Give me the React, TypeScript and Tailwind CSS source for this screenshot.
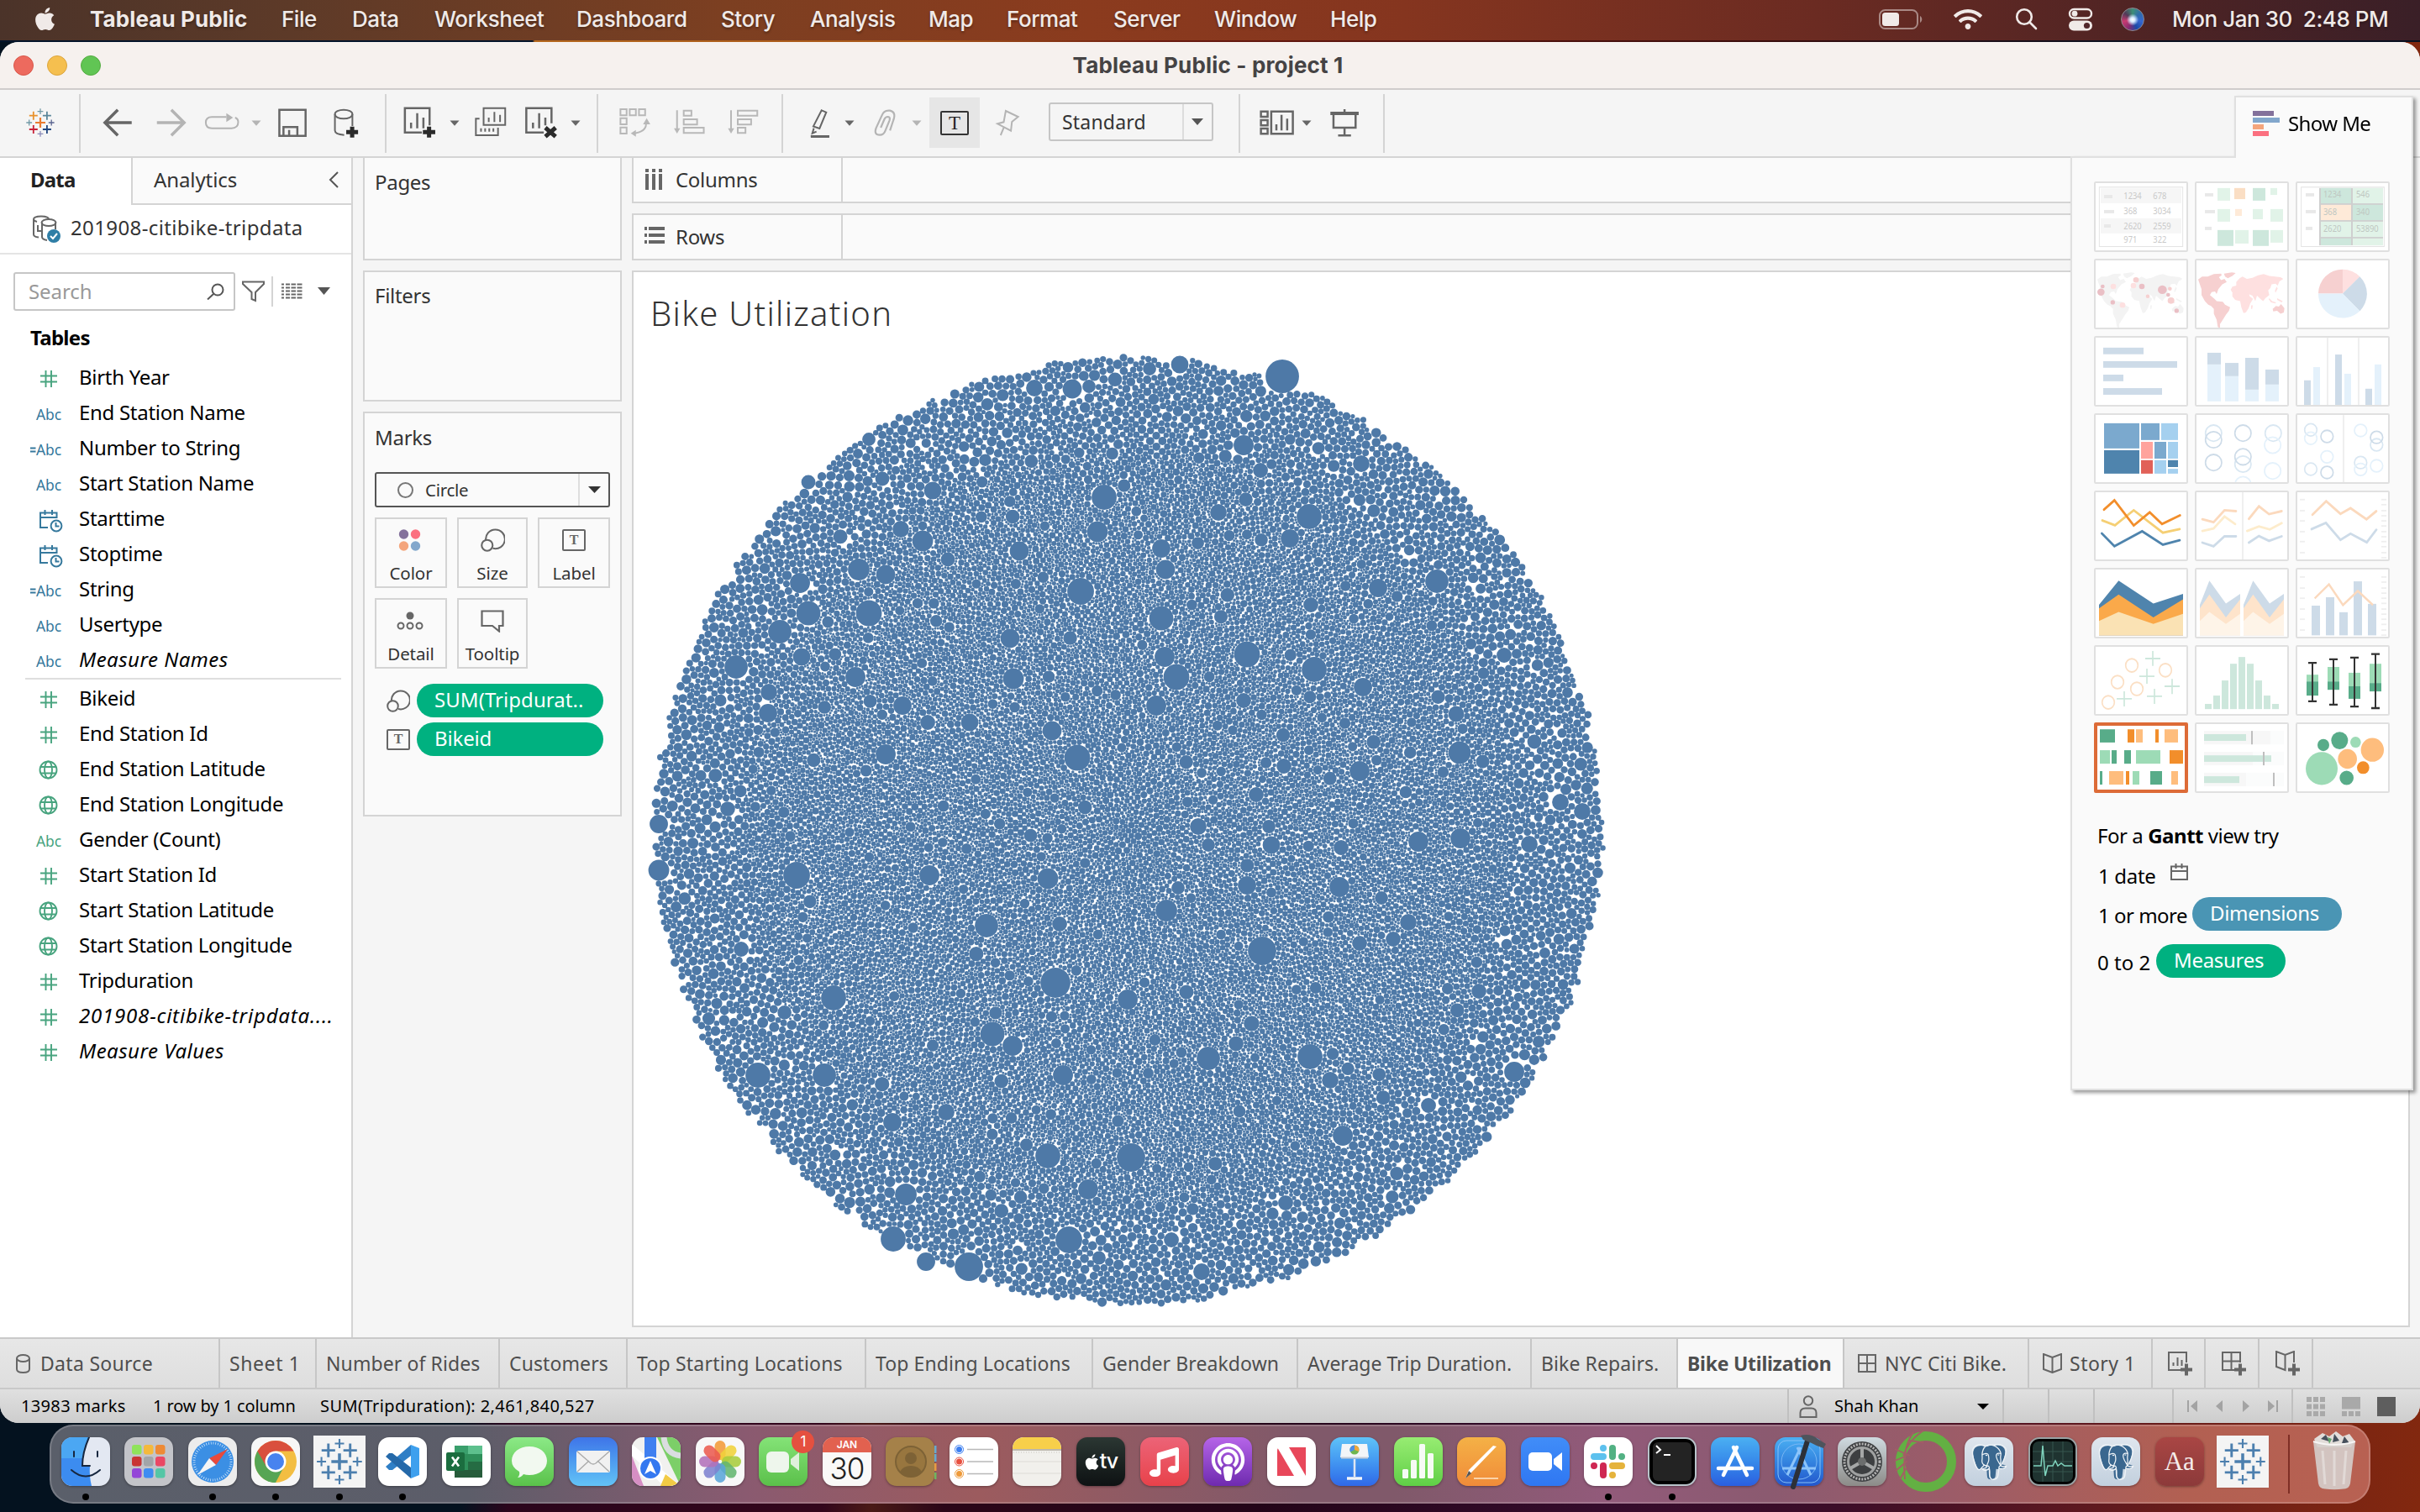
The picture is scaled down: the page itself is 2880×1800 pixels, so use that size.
import React from "react";
import { FaApple, FaWifi, FaPodcast, FaMusic } from "react-icons/fa";
import { SiPostgresql } from "react-icons/si";

/* ---------- packed bubble chart ---------- */

const CX = 1343;
const CY = 989;
const RADIUS = 569;

const BIG: number[][] = [
  [1314, 592, 15], [1286, 704, 16], [1306, 633, 12.5], [1382, 653, 11], [1387, 678, 11.5], [1382, 736, 14.5], [1386, 782, 12],
  [1400, 806, 15.5], [1206, 808, 12.5], [1202, 760, 11.5], [1034, 730, 15.5], [962, 730, 14.5], [928, 752, 14], [876, 794, 14],
  [952, 694, 12], [1022, 678, 13], [1054, 684, 11.5], [1098, 644, 12.5], [1072, 630, 10], [1110, 584, 10.5], [1213, 656, 11.5],
  [1128, 666, 8.5], [962, 574, 8.5], [1050, 570, 8.5], [1034, 523, 8], [1231, 462, 10], [1276, 463, 11.5], [1296, 460, 8],
  [1404, 434, 10.5], [1368, 439, 8], [1018, 806, 12], [954, 782, 10.5], [915, 824, 10], [914, 849, 11], [1074, 840, 11],
  [1104, 860, 9], [1154, 860, 10.5], [1252, 870, 11.5], [1054, 898, 12], [1256, 1170, 18], [1502, 1132, 17], [1282, 902, 15.5],
  [1388, 1084, 13], [1594, 1056, 12], [1676, 1098, 10], [1688, 1002, 12], [1618, 918, 12], [1622, 818, 11], [1564, 797, 15],
  [1376, 840, 12], [1480, 834, 9], [1737, 896, 13.5], [1733, 850, 9.5], [1738, 998, 12], [1528, 912, 9], [1495, 946, 9],
  [1426, 984, 10], [1438, 1006, 8], [1513, 1006, 10.5], [1510, 984, 8], [1484, 1054, 11], [1596, 1009, 9], [1247, 1046, 12.5],
  [1261, 1100, 9], [1342, 1190, 12], [1644, 1069, 8], [1618, 1123, 9], [1402, 1057, 8],
  [1526, 448, 20], [1558, 615, 15], [1484, 779, 15.5], [1710, 692, 14], [1535, 641, 11], [1480, 530, 12], [1620, 552, 10],
  [948, 1042, 16], [784, 981, 11], [784, 1036, 12.5], [1174, 1102, 14], [1106, 1042, 12], [992, 1188, 15], [902, 1280, 15],
  [981, 1280, 14], [1181, 1231, 14.5], [1205, 1245, 12], [1265, 1280, 12], [1438, 1260, 14], [1559, 1258, 15], [1583, 1286, 10],
  [1247, 1376, 15], [1346, 1378, 17], [1598, 1352, 12], [1295, 1416, 12], [1078, 1422, 13], [1063, 1475, 15], [1153, 1508, 17],
  [1272, 1476, 16], [1102, 1502, 11], [1883, 966, 10], [1857, 955, 10], [1820, 1005, 10], [1802, 1276, 12],
  [1658, 1118, 9], [1062, 1336, 11], [1126, 1324, 10], [1394, 1476, 9], [1430, 1514, 10], [1530, 1432, 9], [1700, 1316, 9],
  [1760, 1180, 9], [1450, 610, 10], [1500, 560, 9], [1640, 700, 11], [1790, 780, 9], [1560, 720, 9], [882, 1130, 9],
];

function buildBubbles(): string {
  let seed = 90210;
  const rnd = () => {
    seed = (seed + 0x6d2b79f5) | 0;
    let t = Math.imul(seed ^ (seed >>> 15), 1 | seed);
    t = (t + Math.imul(t ^ (t >>> 7), 61 | t)) ^ t;
    return ((t ^ (t >>> 14)) >>> 0) / 4294967296;
  };
  const xs: number[] = [];
  const ys: number[] = [];
  const rs: number[] = [];
  const CELL = 16;
  const COLS = 200;
  const grid: Record<number, number[]> = {};
  const near = (x: number, y: number, d: number, fn: (i: number) => boolean): boolean => {
    const a = Math.floor((x - d) / CELL);
    const b = Math.floor((x + d) / CELL);
    const c = Math.floor((y - d) / CELL);
    const e = Math.floor((y + d) / CELL);
    for (let gy = c; gy <= e; gy++)
      for (let gx = a; gx <= b; gx++) {
        const list = grid[gy * COLS + gx];
        if (list) for (const i of list) if (fn(i)) return true;
      }
    return false;
  };
  const hits = (x: number, y: number, r: number, pad = 0) =>
    near(x, y, r + 20 + pad, (i) => {
      const dx = xs[i] - x;
      const dy = ys[i] - y;
      const s = rs[i] + r - 0.02 + pad;
      return dx * dx + dy * dy < s * s;
    });
  const add = (x: number, y: number, r: number) => {
    xs.push(x);
    ys.push(y);
    rs.push(r);
    const k = Math.floor(y / CELL) * COLS + Math.floor(x / CELL);
    (grid[k] = grid[k] || []).push(xs.length - 1);
    return xs.length - 1;
  };
  for (const [x, y, r] of BIG) if (!hits(x, y, r)) add(x, y, r);
  for (let i = 0; i < 420; i++) {
    const a = rnd() * Math.PI * 2;
    const d = Math.sqrt(rnd()) * (RADIUS - 14);
    const r = 5.6 + rnd() * rnd() * 4;
    const x = CX + Math.cos(a) * d;
    const y = CY + Math.sin(a) * d;
    if (d > 14 && !hits(x, y, r, 3)) add(x, y, r);
  }

  type Cand = { k: number; a: number; b: number; s: number; r: number };
  const heap: Cand[] = [];
  const push = (c: Cand) => {
    let i = heap.push(c) - 1;
    while (i > 0) {
      const p = (i - 1) >> 1;
      if (heap[p].k <= heap[i].k) break;
      [heap[p], heap[i]] = [heap[i], heap[p]];
      i = p;
    }
  };
  const pop = (): Cand => {
    const top = heap[0];
    const last = heap.pop() as Cand;
    if (heap.length) {
      heap[0] = last;
      let i = 0;
      for (;;) {
        let m = i;
        const l = 2 * i + 1;
        if (l < heap.length && heap[l].k < heap[m].k) m = l;
        if (l + 1 < heap.length && heap[l + 1].k < heap[m].k) m = l + 1;
        if (m === i) break;
        [heap[m], heap[i]] = [heap[i], heap[m]];
        i = m;
      }
    }
    return top;
  };
  const tangent = (a: number, b: number, s: number, r: number): [number, number] | null => {
    const dx = xs[b] - xs[a];
    const dy = ys[b] - ys[a];
    const d = Math.hypot(dx, dy);
    const ra = rs[a] + r;
    const rb = rs[b] + r;
    if (d > ra + rb || d === 0) return null;
    const m = (d * d + ra * ra - rb * rb) / (2 * d);
    const h2 = ra * ra - m * m;
    if (h2 < 0) return null;
    const h = Math.sqrt(h2) * s;
    return [xs[a] + (dx * m - dy * h) / d, ys[a] + (dy * m + dx * h) / d];
  };
  const sample = (x: number, y: number) => {
    const t = Math.hypot(x - CX, y - CY) / RADIUS;
    const q = Math.min(1, Math.max(0, (t - 0.62) / 0.3));
    const base = 3.6 + 1.6 * q * q * (3 - 2 * q);
    return base * (0.62 + 0.7 * rnd());
  };
  const spread = (i: number) => {
    near(xs[i], ys[i], rs[i] + 32, (j) => {
      if (j === i) return false;
      const d = Math.hypot(xs[i] - xs[j], ys[i] - ys[j]);
      if (d > rs[i] + rs[j] + 9) return false;
      for (const s of [1, -1]) {
        const r = sample(xs[i], ys[i]);
        const p = tangent(i, j, s, r);
        if (p) push({ k: Math.hypot(p[0] - CX, p[1] - CY), a: i, b: j, s, r });
      }
      return false;
    });
  };
  const rim = Array.from({ length: 420 }, () => RADIUS - 9 * rnd() * rnd());
  const edge = (x: number, y: number) => {
    const a = (Math.atan2(y - CY, x - CX) + Math.PI) / (2 * Math.PI);
    return rim[Math.min(419, Math.floor(a * 420))];
  };
  const c0 = add(CX, CY, 3.4);
  add(CX + 6.9, CY, 3.4);
  spread(c0);
  while (heap.length) {
    const c = pop();
    const outer = c.k > RADIUS * 0.8;
    const sizes = outer ? [c.r, c.r * 0.8] : [c.r, c.r * 0.75, 1.6];
    for (const r of sizes) {
      const p = tangent(c.a, c.b, c.s, r);
      if (!p) continue;
      if (Math.hypot(p[0] - CX, p[1] - CY) + r > edge(p[0], p[1])) continue;
      if (!hits(p[0], p[1], r)) {
        spread(add(p[0], p[1], r));
        break;
      }
    }
  }
  let d = "";
  for (let i = 0; i < xs.length; i++) {
    const r = rs[i] - 0.07;
    const q = r.toFixed(2);
    const w = (2 * Number(q)).toFixed(2);
    d += `M${(xs[i] - r).toFixed(1)} ${ys[i].toFixed(1)}a${q} ${q} 0 1 0 ${w} 0a${q} ${q} 0 1 0 -${w} 0`;
  }
  return d;
}

const BUBBLES = buildBubbles();

/* ---------- menu bar ---------- */

function MenuBar() {
  return (
    <div className="flex h-[48px] shrink-0 items-center bg-[linear-gradient(90deg,#4b3329_0%,#5d3a28_12%,#7c3f21_30%,#8b3b1e_45%,#85351f_58%,#6b2b22_75%,#502424_88%,#3a1f27_100%)] pb-[3px] font-['Inter',sans-serif] text-[26px] font-medium tracking-[-0.45px] whitespace-nowrap text-[#f0eae8] [text-shadow:0_2px_3px_rgba(0,0,0,0.35)]">
      <FaApple className="mr-[36px] ml-[38px] h-[31px] w-[31px] shrink-0" />
      <div className="w-[230px] shrink-0 pl-[2px] font-bold tracking-[0.1px]">Tableau Public</div>
      <div className="w-[84px] shrink-0">File</div>
      <div className="w-[98px] shrink-0">Data</div>
      <div className="w-[169px] shrink-0">Worksheet</div>
      <div className="w-[172px] shrink-0">Dashboard</div>
      <div className="w-[106px] shrink-0">Story</div>
      <div className="w-[141px] shrink-0">Analysis</div>
      <div className="w-[93px] shrink-0">Map</div>
      <div className="w-[127px] shrink-0">Format</div>
      <div className="w-[120px] shrink-0">Server</div>
      <div className="w-[138px] shrink-0">Window</div>
      <div className="w-[653px] shrink-0">Help</div>
      <svg className="mr-[36px] h-[24px] w-[53px] shrink-0" viewBox="0 0 53 24">
        <rect x="1" y="1" width="45" height="22" rx="6.500" fill="none" stroke="#f0eae8" strokeOpacity=".5" strokeWidth="2" />
        <rect x="4" y="4" width="20" height="16" rx="3.500" fill="#f0eae8" />
        <path d="M49 8c3 1.500 3 6.500 0 8z" fill="#f0eae8" fillOpacity=".5" />
      </svg>
      <FaWifi className="h-[34px] w-[34px] shrink-0" />
      <svg className="ml-[39px] h-[27px] w-[27px] shrink-0" viewBox="0 0 27 27" fill="none" stroke="#f0eae8" strokeWidth="2.600" strokeLinecap="round">
        <circle cx="11" cy="11" r="8.800" />
        <path d="M17.500 17.500 25 25" />
      </svg>
      <svg className="ml-[36px] h-[28px] w-[30px] shrink-0" viewBox="0 0 30 28">
        <rect x="2" y="2" width="26" height="10.500" rx="5.200" fill="none" stroke="#f0eae8" strokeWidth="2.400" />
        <circle cx="8" cy="7.200" r="3.400" fill="#f0eae8" />
        <rect x="1" y="15.500" width="28" height="12" rx="6" fill="#f0eae8" />
        <circle cx="22.500" cy="21.500" r="3.600" fill="#50262a" />
      </svg>
      <div className="ml-[33px] h-[28px] w-[28px] shrink-0 rounded-full border border-[#8d8790] bg-[radial-gradient(circle_at_50%_52%,#fff_0%,#d7ecff_14%,transparent_38%),conic-gradient(from_0deg,#3d8f77,#2f6cab,#3567d0,#1a4aa8,#8a2b70,#c93b70,#513a58,#3d8f77)]" />
      <div className="ml-[33px] w-[262px] shrink-0 whitespace-pre">Mon Jan 30{"  "}2:48 PM</div>
    </div>
  );
}

/* ---------- toolbar ---------- */

function Glyph({ l, className, children }: { l: number; className: string; children: React.ReactNode }) {
  const w = Number(/w-\[(\d+)px\]/.exec(className)?.[1] ?? 36);
  const o = l >= 950 ? 900 : 0;
  return (
    <svg
      className={`h-[36px] shrink-0 overflow-visible [&_*]:[vector-effect:non-scaling-stroke] ${className}`}
      viewBox={`${(l - o) * 1.6333} 384 ${w * 1.6333} 108`}
      preserveAspectRatio="none"
      fill="none"
      stroke="currentColor"
      strokeWidth="2"
    >
      {children}
    </svg>
  );
}

function Tri({ className }: { className: string }) {
  return (
    <svg className={`mt-[15px] h-[7px] w-[12px] shrink-0 ${className}`} viewBox="0 0 12 7" fill="currentColor">
      <path d="M.5.500h11L6 6.700z" />
    </svg>
  );
}

function Sep({ className }: { className: string }) {
  return <div className={`-mt-[16px] h-[70px] w-[2px] shrink-0 bg-[#d4d4d4] ${className}`} />;
}

const MARK: [number, number, number, string][] = [
  [18, 18, 6, "#eb7b30"], [9.800, 9.700, 5, "#e8912c"], [25.900, 9.700, 5, "#5b879b"], [9.800, 26, 5, "#c72037"], [25.900, 26, 5, "#1f457e"],
  [18, 4.700, 3.400, "#7199a6"], [18, 31.300, 3.400, "#8a8bb8"], [4.700, 18, 3.400, "#7199a6"], [31.200, 18, 3.400, "#5b6591"],
];

function TableauMark({ mono, className }: { mono?: string; className: string }) {
  return (
    <svg className={className} viewBox="0 0 36 36" fill="none">
      {MARK.map(([x, y, s, c], i) => (
        <path key={i} d={`M${x - s} ${y}H${x + s}M${x} ${y - s}V${y + s}`} stroke={mono ?? c} strokeWidth={s > 5.500 ? 2.200 : s > 4 ? 1.800 : 1.300} />
      ))}
    </svg>
  );
}

function Toolbar() {
  return (
    <div className="flex h-[81px] shrink-0 items-start border-b-2 border-[#d4d4d4] bg-[#f5f5f5] pt-[21px] text-[#666]">
      <TableauMark className="ml-[30px] h-[36px] w-[36px] shrink-0" />
      <Sep className="ml-[28px]" />
      <Glyph l={120} className="ml-[24px] w-[40px]">
        <path d="M256 438H204M229 392 204 438l25 46" strokeWidth="3.500" />
      </Glyph>
      <Glyph l={185} className="ml-[25px] w-[40px] text-[#b4b4b4]">
        <path d="M305 438H358M333 392 358 438l-25 46" strokeWidth="3.500" />
      </Glyph>
      <Glyph l={242} className="ml-[17px] w-[44px] text-[#b4b4b4]">
        <path d="M440 418H412q-12 0-12 20t12 20h38q13 0 13-22 0-12-6-16" />
        <path d="M440 404l13 16-13 16z" fill="currentColor" stroke="none" />
      </Glyph>
      <Tri className="ml-[13px] text-[#b4b4b4]" />
      <Glyph l={330} className="ml-[19px] w-[36px]">
        <path d="M543 392h51v93H543zM551 485V454h27v31M562 485V464" strokeWidth="2.500" />
      </Glyph>
      <Glyph l={396} className="ml-[30px] w-[34px]">
        <path d="M685 450V408M651 408v58q0 14 18 16" />
        <ellipse cx="668" cy="408" rx="17" ry="16" />
        <path d="M673 472H696M684.500 452V491" stroke="#2b2b2b" strokeWidth="5" />
      </Glyph>
      <Sep className="ml-[28px]" />
      <Glyph l={480} className="ml-[20px] w-[40px]">
        <path d="M835 448V386H787v87H820M799 458V438M811 458V404M823 458V420" strokeWidth="2.500" />
        <path d="M822 472H846M834 452V491" stroke="#2b2b2b" strokeWidth="5" />
      </Glyph>
      <Tri className="ml-[15px]" />
      <Glyph l={564} className="ml-[17px] w-[40px]">
        <path d="M940 386h42v60H940zM950 436V420M961 436V400M972 436V410M932 424h-7v59h43V456M935 470V458M943 470V458M951 470V458M959 470V458" />
      </Glyph>
      <Glyph l={624} className="ml-[20px] w-[40px]">
        <path d="M1072 440V386h-49v87h34M1036 458V438M1048 458V404M1060 448V420" strokeWidth="2.500" />
        <path d="M1060 456l20 32M1080 456l-20 32" stroke="#2b2b2b" strokeWidth="5" />
      </Glyph>
      <Tri className="ml-[15px]" />
      <Sep className="ml-[19px]" />
      <Glyph l={735} className="ml-[23px] w-[42px] text-[#b8b8b8]">
        <path d="M1206 390h12v22h-12zM1224 390h12v22h-12zM1242 390h12v22h-12zM1206 422h12v22h-12zM1206 455h12v22h-12zM1256 440q0 30-22 36" />
        <path d="M1257 422l7 22h-14zM1226 476l10-12v24z" fill="currentColor" stroke="none" />
      </Glyph>
      <Glyph l={800} className="ml-[23px] w-[40px] text-[#b8b8b8]">
        <path d="M1316 394V466M1329 395h15v18h-15zM1329 426h26v19h-26zM1329 456h39v19h-39z" />
        <path d="M1310 458h12l-6 19z" fill="currentColor" stroke="none" />
      </Glyph>
      <Glyph l={865} className="ml-[25px] w-[40px] text-[#b8b8b8]">
        <path d="M1421 394V466M1434 395h38v18h-38zM1434 426h26v19h-26zM1434 456h15v19h-15z" />
        <path d="M1415 458h12l-6 19z" fill="currentColor" stroke="none" />
      </Glyph>
      <Sep className="ml-[25px]" />
      <Glyph l={962} className="ml-[30px] w-[28px]">
        <path d="M127 394l9 7-13 58-12-8zM112 458l-3 18 8-6M106 487h36" />
        <path d="M106 483h36v9h-36z" fill="currentColor" stroke="none" />
      </Glyph>
      <Tri className="ml-[15px]" />
      <Glyph l={1039} className="ml-[22px] w-[28px] text-[#b4b4b4]">
        <path d="M266 432l-6 34M266 432q7-32-6-37-12-3-16 18l-11 44q-5 24 7 25 8 0 11-16l8-36q2-12-3-13-5 0-7 9l-7 30" strokeWidth="2.200" />
      </Glyph>
      <Tri className="ml-[18px] text-[#b4b4b4]" />
      <div className="-mt-[12px] ml-[9px] flex h-[60px] w-[60px] shrink-0 items-center justify-center bg-[#e6e6e6]">
        <div className="flex h-[29px] w-[34px] items-center justify-center rounded-[2px] border-2 border-[#333] font-['Liberation_Serif',serif] text-[23px] leading-none text-[#222]">T</div>
      </div>
      <Glyph l={1185} className="ml-[19px] w-[30px] text-[#b4b4b4]">
        <path d="M485 396l24 21-12 18-2 32-26-25 12-6zM482 452l-7 31" />
      </Glyph>
      <div className="-mt-[6px] ml-[33px] flex h-[46px] w-[196px] shrink-0 items-center rounded-[3px] border-2 border-[#c6c6c6] text-[#333]">
        <div className="w-[157px] pl-[14px] text-[23px] tracking-[0.2px]">Standard</div>
        <div className="h-full w-[2px] bg-[#dcdcdc]" />
        <svg className="ml-[9px] h-[8px] w-[14px]" viewBox="0 0 14 8" fill="#555"><path d="M0 0h14L7 8z" /></svg>
      </div>
      <Sep className="ml-[30px]" />
      <Glyph l={1498} className="ml-[22px] w-[42px]">
        <path d="M981 398h13v19h-13zM981 429h13v19h-13zM981 459h13v19h-13zM1001 398h42v80h-42zM1011 466V444M1021 466V410M1032 466V424" strokeWidth="2.500" />
      </Glyph>
      <Tri className="ml-[9px]" />
      <Glyph l={1582} className="ml-[21px] w-[36px]">
        <path d="M1122 408v48h43V408M1143.500 390v12M1143.500 456v26M1131 484h25" strokeWidth="2.500" />
        <path d="M1116 399h55v12h-55z" fill="currentColor" stroke="none" />
      </Glyph>
      <Sep className="ml-[28px]" />
    </div>
  );
}

/* ---------- data pane ---------- */

type Kind = "num" | "abc" | "calc" | "date" | "geo" | "abcg";
type Field = { kind: Kind; name: string; style?: string };

const DIMENSIONS: Field[] = [
  { kind: "num", name: "Birth Year" },
  { kind: "abc", name: "End Station Name" },
  { kind: "calc", name: "Number to String" },
  { kind: "abc", name: "Start Station Name" },
  { kind: "date", name: "Starttime" },
  { kind: "date", name: "Stoptime" },
  { kind: "calc", name: "String" },
  { kind: "abc", name: "Usertype" },
  { kind: "abc", name: "Measure Names", style: "italic tracking-[0.480px]" },
];
const MEASURES: Field[] = [
  { kind: "num", name: "Bikeid" },
  { kind: "num", name: "End Station Id" },
  { kind: "geo", name: "End Station Latitude" },
  { kind: "geo", name: "End Station Longitude" },
  { kind: "abcg", name: "Gender (Count)" },
  { kind: "num", name: "Start Station Id" },
  { kind: "geo", name: "Start Station Latitude" },
  { kind: "geo", name: "Start Station Longitude" },
  { kind: "num", name: "Tripduration" },
  { kind: "num", name: "201908-citibike-tripdata....", style: "italic tracking-[0.800px]" },
  { kind: "num", name: "Measure Values", style: "italic tracking-[0.480px]" },
];

function KindIcon({ kind }: { kind: Kind }) {
  if (kind === "abc" || kind === "calc" || kind === "abcg")
    return (
      <div className={`flex w-[73px] items-center justify-end pt-[4px] text-[17.500px] tracking-[-0.1px] ${kind === "abcg" ? "text-[#48a47f]" : "text-[#36799d]"}`}>
        {kind === "calc" && (
          <svg className="h-[7px] w-[7px]" viewBox="0 0 7 7" stroke="currentColor" strokeWidth="1.800"><path d="M0 1.500h6.500M0 5.500h6.500" /></svg>
        )}
        Abc
      </div>
    );
  if (kind === "num")
    return (
      <svg className="mt-[4px] ml-[48px] h-[20px] w-[20px]" viewBox="0 0 20 20" fill="none" stroke="#48a47f" strokeWidth="1.900">
        <path d="M0 6.500h20M0 13.500h20M6.500 0v20M13 0v20" />
      </svg>
    );
  if (kind === "geo")
    return (
      <svg className="mt-[3px] ml-[46px] h-[23px] w-[23px]" viewBox="0 0 23 23" fill="none" stroke="#48a47f" strokeWidth="1.900">
        <circle cx="11.500" cy="11.500" r="10" />
        <ellipse cx="11.500" cy="11.500" rx="4.500" ry="10" />
        <path d="M2 8h19M2 15.500h19" />
      </svg>
    );
  return (
    <svg className="mt-[6px] ml-[46px] h-[27px] w-[29px]" viewBox="0 0 29 27" fill="none" stroke="#36799d" strokeWidth="2">
      <path d="M11 21H2V3.500h19.500V9H2M7.500 0v6M16 0v6" />
      <circle cx="21" cy="19" r="6.400" />
      <path d="M20.500 15v4.500h4" />
    </svg>
  );
}

function FieldRow({ field }: { field: Field }) {
  return (
    <div className="flex h-[42px] shrink-0 items-center">
      <div className="flex w-[94px] shrink-0">
        <KindIcon kind={field.kind} />
      </div>
      <div className={`pb-px text-[24px] whitespace-nowrap text-black ${field.style ?? "tracking-[-0.300px]"}`}>{field.name}</div>
    </div>
  );
}

function DataPane() {
  return (
    <div className="flex w-[420px] shrink-0 flex-col border-r-2 border-[#d4d4d4] bg-white">
      <div className="flex h-[56px] shrink-0 text-[24px]">
        <div className="flex w-[156px] items-center pb-[5px] pl-[36px] text-[24px] font-bold tracking-[-0.8px] text-[#222]">Data</div>
        <div className="flex flex-1 items-center border-b-2 border-l-2 border-[#d4d4d4] bg-[#fafafa] pb-[2px] pl-[25px] tracking-[-0.1px] text-[#333]">
          Analytics
          <svg className="mr-[14px] ml-auto h-[20px] w-[13px]" viewBox="0 0 13 20" fill="none" stroke="#555" strokeWidth="2"><path d="M11 1 2 10l9 9" /></svg>
        </div>
      </div>
      <div className="flex h-[59px] shrink-0 items-center border-b-2 border-[#e4e4e4] text-[#333]">
        <svg className="ml-[38px] h-[34px] w-[36px] shrink-0" viewBox="0 0 36 34" fill="none" stroke="#666" strokeWidth="2">
          <path d="M20 5q0-3.500-9-3.500T2 5v18q0 3 6 3.500M2 5q0 2 4 3M28 17V9M12 9v17q0 3 6 4M7 12v7h6" />
          <ellipse cx="20" cy="9" rx="8.500" ry="4" />
          <circle cx="26" cy="25" r="8" fill="#2f7ea6" stroke="none" />
          <path d="M22 25l3 3 5-6" stroke="#fff" />
        </svg>
        <div className="ml-[10px] pb-[4px] text-[24px] tracking-[0.38px] whitespace-nowrap">201908-citibike-tripdata</div>
      </div>
      <div className="mt-[21px] flex h-[46px] shrink-0 items-center pl-[16px]">
        <div className="flex h-[46px] w-[264px] items-center rounded-[3px] border-2 border-[#c6c6c6] pl-[16px] text-[24px] tracking-[-0.1px] text-[#999]">
          Search
          <svg className="mr-[11px] ml-auto h-[20px] w-[21px]" viewBox="0 0 21 20" fill="none" stroke="#555" strokeWidth="2">
            <circle cx="13" cy="8" r="6.500" />
            <path d="M8 13 1 19.500" />
          </svg>
        </div>
        <svg className="ml-[8px] h-[26px] w-[27px]" viewBox="0 0 27 26" fill="none" stroke="#666" strokeWidth="2">
          <path d="M1 1.500h25v2.500L16 14v10l-4.500-2V14L1 4z" />
        </svg>
        <div className="ml-[8px] h-[36px] w-[2px] bg-[#d4d4d4]" />
        <svg className="mb-[2px] ml-[10px] h-[19px] w-[25px]" viewBox="0 0 25 19" stroke="#666" strokeWidth="2.200">
          {[1.500, 5.500, 9.500, 13.500, 17.500].map((y) => (
            <path key={y} d={`M0 ${y}h3M5 ${y}h5M11.500 ${y}h5.500M18.500 ${y}h6`} />
          ))}
        </svg>
        <svg className="mb-[2px] ml-[18px] h-[9px] w-[15px]" viewBox="0 0 15 9" fill="#555"><path d="M0 0h15L7.500 9z" /></svg>
      </div>
      <div className="mt-[12px] flex h-[46px] shrink-0 items-center pb-[6px] pl-[36px] text-[24px] font-bold tracking-[-0.7px] text-black">Tables</div>
      {DIMENSIONS.map((f) => (
        <FieldRow key={f.name} field={f} />
      ))}
      <div className="mt-[1px] mr-[12px] mb-[1px] ml-[30px] h-[2px] shrink-0 bg-[#dedede]" />
      {MEASURES.map((f) => (
        <FieldRow key={f.name} field={f} />
      ))}
    </div>
  );
}

/* ---------- cards ---------- */

function SizeIcon({ className }: { className: string }) {
  return (
    <svg className={className} viewBox="0 0 28 27" fill="none" stroke="#666" strokeWidth="2">
      <path d="M6 14a11 11 0 1 1 8 9" />
      <circle cx="7.500" cy="19.500" r="6.300" />
    </svg>
  );
}

function LetterBox({ className }: { className: string }) {
  return <div className={`flex items-center justify-center rounded-[2px] border-2 border-[#666] font-['Liberation_Serif',serif] leading-none font-bold text-[#666] ${className}`}>T</div>;
}

function MarkButton({ label, className, children }: { label: string; className: string; children: React.ReactNode }) {
  return (
    <div className={`flex h-[84px] flex-col items-center border-2 border-[#d4d4d4] pt-[10px] ${className}`}>
      <div className="flex h-[30px] items-center">{children}</div>
      <div className="mt-[10px] text-[20.500px] leading-[28px] tracking-[-0.1px] text-[#333]">{label}</div>
    </div>
  );
}

function Cards() {
  return (
    <div className="-mt-[2px] ml-[12px] flex w-[308px] shrink-0 flex-col gap-[12px] text-[24px] tracking-[-0.3px] text-[#333]">
      <div className="h-[124px] border-2 border-[#d4d4d4] bg-[#fafafa] pt-[11px] pl-[12px]">Pages</div>
      <div className="h-[156px] border-2 border-[#d4d4d4] bg-[#fafafa] pt-[10px] pl-[12px]">Filters</div>
      <div className="flex h-[482px] flex-col border-2 border-[#d4d4d4] bg-[#fafafa] pt-[11px] pl-[12px]">
        <div className="h-[59px]">Marks</div>
        <div className="flex h-[42px] w-[280px] items-center rounded-[3px] border-2 border-[#555]">
          <div className="ml-[25px] h-[19px] w-[19px] rounded-full border-2 border-[#777]" />
          <div className="ml-[14px] w-[182px] text-[20.500px]">Circle</div>
          <div className="h-full w-[2px] bg-[#dedede]" />
          <svg className="ml-[10px] h-[8px] w-[15px]" viewBox="0 0 15 8" fill="#333"><path d="M0 0h15L7.500 8z" /></svg>
        </div>
        <div className="mt-[12px] flex gap-[12px]">
          <MarkButton label="Color" className="w-[86px]">
            <svg className="mr-[2px] h-[28px] w-[28px]" viewBox="0 0 28 28">
              <circle cx="6.500" cy="7" r="5.700" fill="#83719b" />
              <circle cx="20.500" cy="7" r="5.700" fill="#fb7080" />
              <circle cx="6.500" cy="21" r="5.700" fill="#f4a57c" />
              <circle cx="20.500" cy="21" r="5.700" fill="#82a7cc" />
            </svg>
          </MarkButton>
          <MarkButton label="Size" className="w-[84px]"><SizeIcon className="h-[28px] w-[29px]" /></MarkButton>
          <MarkButton label="Label" className="w-[86px]"><LetterBox className="h-[26px] w-[28px] text-[16px]" /></MarkButton>
        </div>
        <div className="mt-[12px] flex gap-[12px]">
          <MarkButton label="Detail" className="w-[86px]">
            <svg className="mr-[2px] h-[24px] w-[32px]" viewBox="0 0 32 24" fill="none" stroke="#666" strokeWidth="2">
              <circle cx="16" cy="6" r="4.500" fill="#666" stroke="none" />
              <circle cx="5" cy="18" r="3.500" />
              <circle cx="16" cy="18" r="3.500" />
              <circle cx="27" cy="18" r="3.500" />
            </svg>
          </MarkButton>
          <MarkButton label="Tooltip" className="w-[84px]">
            <svg className="h-[28px] w-[28px]" viewBox="0 0 28 28" fill="none" stroke="#666" strokeWidth="2.200">
              <path d="M1.500 2.500h25V20H22v6.500L14 20H1.500z" />
            </svg>
          </MarkButton>
        </div>
        <div className="mt-[18px] flex h-[40px] items-center pl-[14px]">
          <SizeIcon className="h-[27px] w-[28px]" />
          <div className="ml-[8px] flex h-[40px] w-[222px] items-center rounded-full bg-[#00b180] pb-[2px] pl-[21px] text-[24px] tracking-[0.05px] text-white">SUM(Tripdurat..</div>
        </div>
        <div className="mt-[6px] flex h-[40px] items-center pl-[14px]">
          <LetterBox className="h-[25px] w-[28px] text-[16px]" />
          <div className="ml-[8px] flex h-[40px] w-[222px] items-center rounded-full bg-[#00b180] pb-[2px] pl-[21px] text-[24px] tracking-[-0.15px] text-white">Bikeid</div>
        </div>
      </div>
    </div>
  );
}

function Shelf({ label, className, children }: { label: string; className: string; children: React.ReactNode }) {
  return (
    <div className={`flex shrink-0 border-2 border-[#d4d4d4] bg-[#fafafa] ${className}`}>
      <div className="flex w-[249px] items-center border-r-2 border-[#d4d4d4] pl-[13px] text-[24px] tracking-[-0.3px] text-[#333]">
        <div className="w-[37px]">{children}</div>
        {label}
      </div>
    </div>
  );
}

function View() {
  return (
    <div className="-mt-[2px] ml-[12px] flex w-[2116px] shrink-0 flex-col">
      <Shelf label="Columns" className="h-[56px]">
        <svg className="-mt-[2px] h-[25px] w-[24px]" viewBox="0 0 24 25" fill="#666">
          <path d="M1 0h4v4H1zM9 0h4v4H9zM17 0h4v4h-4zM1 6h4v19H1zM9 6h4v19H9zM17 6h4v19h-4z" />
        </svg>
      </Shelf>
      <Shelf label="Rows" className="mt-[12px] h-[56px]">
        <svg className="-mt-[4px] h-[21px] w-[24px]" viewBox="0 0 24 21" fill="#666">
          <path d="M-1 0h4v4h-4zM5 0h19v4H5zM-1 8h4v4h-4zM5 8h19v4H5zM-1 16h4v4h-4zM5 16h19v4H5z" />
        </svg>
      </Shelf>
      <div className="mt-[12px] flex h-[1258px] flex-col border-2 border-[#d4d4d4] bg-white">
        <div className="h-[88px] pt-[21px] pl-[20px] text-[40px] leading-[56px] font-light tracking-[1.3px] text-[#333]">Bike Utilization</div>
        <svg className="ml-[13px] h-[1156px] w-[1152px]" viewBox="767 412 1152 1156" fill="#4e79a7">
          <path d={BUBBLES} />
        </svg>
      </div>
    </div>
  );
}

/* ---------- show me ---------- */

function Thumb({ col, row, active, children }: { col: number; row: number; active?: boolean; children: React.ReactNode }) {
  const box = row < 6 ? `${96 + col * 360} ${73 + row * 257.6} 336 235.2` : `${96 + col * 360} ${row === 6 ? 73 : 313.5} 336 219.5`;
  return (
    <div className={`relative h-[84px] w-[112px] rounded-[2px] bg-white ${active ? "outline-[4px] -outline-offset-4 outline-[#dd6b37]" : "outline-2 -outline-offset-2 outline-[#e0e0e0]"}`}>
      <svg className="h-[84px] w-[112px]" viewBox={box} preserveAspectRatio="none" fill="none">
        {children}
      </svg>
    </div>
  );
}

const R = ({ d, f }: { d: number[][]; f: string }) => (
  <>
    {d.map(([x, y, w, h], i) => (
      <rect key={i} x={x} y={y} width={w} height={h} fill={f} />
    ))}
  </>
);
const C = ({ d, s }: { d: number[][]; s: string }) => (
  <>
    {d.map(([x, y, r], i) => (
      <ellipse key={i} cx={x} cy={y} rx={r} ry={r * 0.93} stroke={s} strokeWidth="5" />
    ))}
  </>
);
const B = ({ d }: { d: [number, number, number, string][] }) => (
  <>
    {d.map(([x, y, r, f], i) => (
      <ellipse key={i} cx={x} cy={y} rx={r} ry={r * 0.9} fill={f} />
    ))}
  </>
);

const AMERICAS =
  "M468 400l14-10 20 0 22-8 26-2 2 6-10 6 8 10 12-4 8 10-16 8-14 16-6 16-6-8-12 2-6 10 8 6 8 6 8 8 22 2 8 10 18 8-4 12-10 12-8 12-8 12-6 8 0 14-8-4-4-24-10-20 0-16-10-10-10-4-12-12-12-20 0-20zM560 380l28-4 14 2-12 10-16 8-10-6z";
const OLD_WORLD =
  "M604 420l0-12 12-12 10-6 16 8 20-4 20-8 20-4 20 6 40 4 10 6-14 8-6 14-8-6-14 2-4 12-8 8 4 16-14 10-8 10-10-8-12-10-6 18-10-18-14-6 6 12-10 6-14-16-10-10-14 0-14 6-8-12 6-10zM590 446l10-14 26-2 20 6 6 20 12 8-10 16-6 16-10 14-8 2-8-20-4-20-18-4-10-12zM657 486l6 0-2 12-4 0z";
const OCEANIA = "M734 498l12-10 10 2 8-8 12 14-2 14-12 4-12-10-14 2z";
const ISLANDS = "M722 462l10 10 14 4-2 4-16-4-8-10zM742 438l6-14 4 6-8 14zM750 462l20 10-4 4-16-8z";

function ShowMe() {
  const g1 = "#e1f3e8";
  const g2 = "#cde7dc";
  const b1 = "#cddbe8";
  const b2 = "#e4f1fb";
  return (
    <div className="absolute top-[114px] left-[2464px] h-[1184px] w-[408px] drop-shadow-[3px_3px_2px_rgba(0,0,0,0.4)]">
      <div className="relative z-10 ml-auto flex h-[74px] w-[213px] items-center border-2 border-b-0 border-[#e0e0e0] bg-[#fafafa] pb-[10px] pl-[20px]">
        <svg className="h-[30px] w-[32px] shrink-0" viewBox="0 0 32 30">
          <path d="M0 0h25v6H0z" fill="#83719b" />
          <path d="M0 8h32v6H0z" fill="#82a7cc" />
          <path d="M0 16h13v6H0z" fill="#f4a57c" />
          <path d="M0 24h19v6H0z" fill="#fb7080" />
        </svg>
        <div className="ml-[10px] text-[24px] tracking-[-0.6px] whitespace-nowrap text-black">Show Me</div>
      </div>
      <div className="-mt-[2px] h-[1112px] border-2 border-[#e0e0e0] bg-[#fafafa] pl-[26px]">
        <div className="grid grid-cols-[112px_112px_112px] gap-[8px] pt-[28px]">
          <Thumb col={0} row={0}>
            <rect x="115" y="92" width="298" height="198" stroke="#e4e4e4" strokeWidth="3" />
            <R f="#f6f6f6" d={[[120, 96, 288, 50], [120, 196, 288, 50]]} />
            <R f="#e8e8e8" d={[[132, 118, 30, 11], [132, 168, 36, 11], [132, 216, 24, 11]]} />
            <g fill="#c9c9c9" fontSize="28">
              <text x="202" y="131">1234</text><text x="307" y="131">678</text>
              <text x="202" y="182">368</text><text x="307" y="182">3034</text>
              <text x="202" y="232">2620</text><text x="307" y="232">2559</text>
              <text x="202" y="277">971</text><text x="307" y="277">322</text>
            </g>
          </Thumb>
          <Thumb col={1} row={0}>
            <R f="#e8e8e8" d={[[492, 112, 30, 11], [492, 168, 36, 11], [492, 224, 24, 11]]} />
            <R f={g1} d={[[537, 95, 45, 42], [726, 95, 24, 23], [537, 165, 45, 42], [663, 165, 36, 34], [726, 165, 45, 42], [600, 235, 48, 45], [726, 235, 45, 42]]} />
            <R f={g2} d={[[663, 95, 45, 42], [537, 235, 57, 53], [663, 235, 57, 53]]} />
            <R f="#fadec4" d={[[597, 95, 39, 37]]} />
            <R f="#feead8" d={[[600, 165, 24, 23]]} />
          </Thumb>
          <Thumb col={2} row={0}>
            <rect x="836" y="92" width="296" height="198" stroke="#e4e4e4" strokeWidth="3" />
            <R f="#e8e8e8" d={[[852, 112, 30, 11], [852, 168, 36, 11], [852, 224, 24, 11]]} />
            <R f="#cfcfcf" d={[[900, 95, 228, 191]]} />
            <R f={g2} d={[[906, 95, 108, 51], [1020, 151, 108, 51], [906, 263, 108, 23]]} />
            <R f={g1} d={[[1020, 95, 108, 51], [906, 207, 108, 51], [1020, 207, 108, 51], [1020, 263, 108, 23]]} />
            <R f="#feead8" d={[[906, 151, 108, 51]]} />
            <g fill="#bfc7c2" fontSize="28">
              <text x="915" y="127">1234</text><text x="1032" y="127">546</text>
              <text x="915" y="186">368</text><text x="1032" y="186">340</text>
              <text x="915" y="242">2620</text><text x="1032" y="242">53890</text>
            </g>
          </Thumb>
          <Thumb col={0} row={1}>
            <g transform="translate(-360 0)" fill="#f3f3f3"><path d={AMERICAS} /><path d={OLD_WORLD} /><path d={OCEANIA} /><path d={ISLANDS} /></g>
            <B d={[[121, 442, 13, "#eabfc5"], [127, 423, 7, "#eabfc5"], [165, 423, 10, "#fde0e0"], [246, 401, 10, "#f6d0d0"], [237, 420, 10, "#fde0e0"], [267, 423, 10, "#eabfc5"], [340, 434, 16, "#eabfc5"], [367, 431, 7, "#f6d0d0"], [361, 451, 7, "#eabfc5"], [371, 470, 12, "#f6d0d0"], [288, 456, 7, "#f6d0d0"], [163, 476, 8, "#eabfc5"], [198, 485, 10, "#fde0e0"], [391, 504, 8, "#eabfc5"]]} />
          </Thumb>
          <Thumb col={1} row={1}>
            <path d={AMERICAS} fill="#f6d0d0" /><path d={OLD_WORLD} fill="#fee0e0" /><path d={ISLANDS} fill="#fee0e0" /><path d={OCEANIA} fill="#f6d0d0" />
          </Thumb>
          <Thumb col={2} row={1}>
            <path d="M984 447V366A87 81 0 0 0 897 447z" fill="#f6d0d0" />
            <path d="M984 447V366A87 81 0 0 1 1045 390z" fill="#fee0e0" />
            <path d="M984 447 1045 390A87 81 0 0 1 1045 505z" fill={b1} />
            <path d="M984 447 1045 505A87 81 0 0 1 897 447z" fill={b2} />
          </Thumb>
          <Thumb col={0} row={2}>
            <R f={b1} d={[[129, 627, 144, 22], [129, 672, 264, 22], [129, 717, 72, 22], [129, 762, 210, 22]]} />
          </Thumb>
          <Thumb col={1} row={2}>
            <R f={b2} d={[[501, 683, 48, 123], [564, 722, 48, 84], [636, 767, 48, 39], [708, 750, 48, 56]]} />
            <R f={b1} d={[[501, 644, 48, 39], [564, 678, 48, 44], [636, 661, 48, 106], [708, 700, 48, 50]]} />
          </Thumb>
          <Thumb col={2} row={2}>
            <R f="#efefef" d={[[927, 594, 6, 225], [1038, 594, 6, 225]]} />
            <R f={b1} d={[[846, 736, 24, 82], [957, 650, 24, 168], [1065, 764, 24, 54]]} />
            <R f={b2} d={[[879, 692, 24, 126], [990, 714, 24, 104], [1098, 683, 24, 135]]} />
          </Thumb>
          <Thumb col={0} row={3}>
            <R f="#7ba9ce" d={[[132, 879, 126, 84], [264, 879, 66, 56], [312, 941, 42, 56]]} />
            <R f="#4f84ad" d={[[132, 969, 126, 78], [360, 1002, 36, 23]]} />
            <R f="#a5d0ef" d={[[336, 879, 60, 56], [360, 941, 36, 56], [312, 1002, 42, 45], [360, 1031, 36, 16]]} />
            <R f="#ffa39c" d={[[264, 941, 42, 56]]} />
            <R f="#e16158" d={[[264, 1002, 42, 45]]} />
          </Thumb>
          <Thumb col={1} row={3}>
            <C s="#d9e7f2" d={[[523, 912, 29], [628, 1015, 29], [736, 912, 29]]} />
            <C s={b1} d={[[523, 934, 29], [523, 1010, 29], [628, 912, 29], [628, 991, 29]]} />
            <C s={b2} d={[[734, 952, 29], [734, 1038, 29], [628, 1084, 29]]} />
          </Thumb>
          <Thumb col={2} row={3}>
            <R f="#efefef" d={[[984, 852, 6, 225]]} />
            <C s="#d9e7f2" d={[[870, 901, 22], [870, 1032, 22], [1105, 951, 22], [1048, 1010, 22]]} />
            <C s={b2} d={[[870, 929, 22], [928, 991, 22], [1048, 903, 22], [1048, 1033, 22], [1105, 1021, 22]]} />
            <C s={b1} d={[[928, 923, 22], [928, 1043, 22], [1105, 926, 22]]} />
          </Thumb>
          <Thumb col={0} row={4}>
            <g strokeWidth="8" strokeLinecap="round">
              <path d="M126 1203 171 1219 238 1169 342 1244 402 1232" stroke="#f5cf74" />
              <path d="M132 1167 169 1136 238 1220 295 1176 339 1215 403 1186" stroke="#f28e2b" />
              <path d="M124 1246 169 1289 268 1239 342 1284 402 1269" stroke="#4f84ad" />
            </g>
          </Thumb>
          <Thumb col={1} row={4}>
            <R f="#efefef" d={[[624, 1109, 6, 225]]} />
            <g strokeWidth="8" strokeLinecap="round">
              <path d="M483 1199 523 1209 562 1169 603 1172M649 1198 685 1156 721 1182 766 1172" stroke="#fbd9bd" />
              <path d="M483 1238 523 1230 562 1190 600 1215M643 1238 685 1223 724 1233 766 1212" stroke="#fdeccc" />
              <path d="M483 1277 523 1289 562 1256 603 1256M649 1277 685 1255 721 1271 766 1256" stroke={b1} />
            </g>
          </Thumb>
          <Thumb col={2} row={4}>
            <g strokeWidth="8" strokeLinecap="round">
              <path d="M876 1184 925 1139 976 1181 1012 1162 1069 1199 1104 1172" stroke="#fbd9bd" />
              <path d="M873 1232 924 1211 976 1268 1012 1247 1070 1276 1104 1234" stroke={b1} />
            </g>
            <R f="#efefef" d={[1131, 1168, 1202, 1238, 1271, 1308].flatMap((y) => [[831, y, 18, 5], [1122, y, 18, 5], [1122, y + 17, 18, 5]])} />
          </Thumb>
          <Thumb col={0} row={5}>
            <path d="M114 1484 184 1404 308 1480 414 1448V1586H114z" fill="#4f84ad" />
            <path d="M114 1496 184 1450 308 1526 414 1466V1586H114z" fill="#faa94a" />
            <path d="M114 1538 184 1508 308 1548 414 1514V1586H114z" fill="#fae2b4" />
          </Thumb>
          <Thumb col={1} row={5}>
            {[0, 156].map((o) => (
              <g key={o} transform={`translate(${o} 0)`}>
                <path d="M474 1484 508 1404 567 1480 618 1448V1586H474z" fill={b1} />
                <path d="M474 1496 508 1450 567 1526 618 1466V1586H474z" fill="#fee4cb" />
                <path d="M474 1538 508 1508 567 1548 618 1514V1586H474z" fill="#fef4e8" />
              </g>
            ))}
          </Thumb>
          <Thumb col={2} row={5}>
            <R f={b1} d={[[873, 1487, 30, 99], [924, 1459, 30, 127], [972, 1509, 30, 77], [1023, 1406, 30, 180], [1074, 1481, 30, 105]]} />
            <path d="M884 1463 935 1416 985 1485 1038 1438 1092 1485" stroke="#fbd9bd" strokeWidth="7" />
            <R f="#efefef" d={[1389, 1426, 1460, 1496, 1530, 1566].flatMap((y) => [[831, y, 18, 5], [1122, y, 18, 5], [1122, y + 17, 18, 5]])} />
          </Thumb>
          <Thumb col={0} row={6}>
            <C s="#fbdfc4" d={[[231, 136, 22], [351, 151, 22], [180, 188, 22], [249, 209, 22], [147, 251, 22]]} />
            <path d="M279 115h54M306 91v47M258 170h54M285 146v47M348 201h54M375 178v47M177 240h54M204 217v47M285 232h54M312 209v47" stroke={g2} strokeWidth="5" />
          </Thumb>
          <Thumb col={1} row={6}>
            <R f={g2} d={[[492, 256, 24, 16], [522, 230, 24, 42], [552, 183, 24, 89], [582, 131, 24, 141], [612, 110, 24, 162], [642, 131, 24, 141], [672, 183, 24, 89], [702, 230, 24, 42], [732, 256, 24, 16]]} />
          </Thumb>
          <Thumb col={2} row={6}>
            <R f="#9ddbb6" d={[[855, 165, 42, 21], [930, 141, 42, 45], [1005, 159, 42, 42], [1080, 131, 42, 60]]} />
            <R f="#58ac89" d={[[855, 186, 42, 44], [930, 186, 42, 26], [1005, 201, 42, 39], [1080, 191, 42, 26]]} />
            <path d="M876 128v120M861 128h30M861 248h30M951 117v141M936 117h30M936 258h30M1026 112v152M1011 112h30M1011 264h30M1101 101v168M1086 101h30M1086 269h30" stroke="#333" strokeWidth="6" />
          </Thumb>
          <Thumb col={0} row={7} active>
            <R f="#58ac89" d={[[117, 335, 54, 41], [159, 400, 18, 42], [204, 400, 24, 42], [117, 465, 9, 42], [297, 465, 42, 42]]} />
            <R f="#f28e2b" d={[[216, 335, 24, 41], [315, 335, 12, 41], [366, 400, 48, 42], [210, 465, 12, 42]]} />
            <R f="#febd7d" d={[[246, 335, 24, 41], [348, 335, 48, 41], [150, 465, 51, 42], [372, 465, 24, 42]]} />
            <R f="#9ddbb6" d={[[117, 400, 36, 42], [246, 400, 87, 42], [234, 465, 24, 42]]} />
          </Thumb>
          <Thumb col={1} row={7}>
            <R f="#fbfcfc" d={[[489, 340, 285, 42], [489, 405, 285, 42], [489, 470, 285, 42]]} />
            <R f="#f7f7f7" d={[[489, 340, 237, 42], [489, 405, 174, 42], [489, 470, 150, 42]]} />
            <R f={g2} d={[[489, 350, 150, 21], [489, 416, 240, 20], [489, 481, 126, 21]]} />
            <R f="#bfbfbf" d={[[657, 340, 6, 42], [699, 405, 6, 42], [735, 470, 6, 42]]} />
          </Thumb>
          <Thumb col={2} row={7}>
            <B d={[[909, 457, 57, "#9ddbb6"], [915, 384, 21, "#58ac89"], [973, 370, 30, "#58ac89"], [1030, 375, 19, "#9ddbb6"], [1090, 399, 41, "#febd7d"], [1001, 427, 34, "#febd7d"], [1057, 454, 22, "#f28e2b"], [998, 486, 25, "#58ac89"]]} />
          </Thumb>
        </div>
        <div className="mt-[29px] pl-[4px] text-[24px] tracking-[-0.3px] whitespace-nowrap text-black">
          <div className="flex h-[44px] items-center"><span className="tracking-[-0.450px] whitespace-pre">For a <b>Gantt</b> view try</span></div>
          <div className="mt-[4px] flex h-[44px] items-center pl-px">
            1 date
            <svg className="mb-[10px] ml-[17px] h-[21px] w-[21px]" viewBox="0 0 21 21" fill="none" stroke="#666" strokeWidth="2">
              <path d="M1 3.500h19V19H1zM1 9h19M6.500 0v6M13.500 0v6" />
            </svg>
          </div>
          <div className="mt-[3px] flex h-[44px] items-center pl-px">
            <div className="w-[112px] tracking-[-0.5px]">1 or more</div>
            <div className="-mt-[4px] flex h-[40px] w-[178px] items-center rounded-full bg-[#4a95b4] pb-[2px] pl-[21px] text-white">Dimensions</div>
          </div>
          <div className="mt-[12px] flex h-[44px] items-center">
            <div className="w-[70px] tracking-[0px]">0 to 2</div>
            <div className="-mt-[4px] flex h-[40px] w-[154px] items-center rounded-full bg-[#00b180] pb-[2px] pl-[21px] text-white">Measures</div>
          </div>
        </div>
      </div>
    </div>
  );
}

/* ---------- sheet tabs and status bar ---------- */

function Tab({ className, children }: { className: string; children: React.ReactNode }) {
  return <div className={`flex h-[58px] shrink-0 items-center border-r-2 border-[#c6c6c6] ${className}`}>{children}</div>;
}

function SheetTabs() {
  return (
    <div className="flex h-[62px] shrink-0 border-t-2 border-b-2 border-[#c9c9c9] bg-gradient-to-b from-[#e7e7e7] to-[#dedede] text-[23px] tracking-[0.1px] whitespace-nowrap text-[#4e4e4e]">
      <Tab className="w-[262px] pl-[19px] tracking-[0.3px]">
        <svg className="mr-[12px] h-[23px] w-[17px]" viewBox="0 0 17 23" fill="none" stroke="#666" strokeWidth="2">
          <ellipse cx="8.500" cy="5" rx="7.500" ry="4" />
          <path d="M1 5v13q0 4 7.500 4T16 18V5" />
        </svg>
        Data Source
      </Tab>
      <Tab className="w-[115px] pl-[11px] tracking-[0.600px]">Sheet 1</Tab>
      <Tab className="w-[218px] pl-[11px]">Number of Rides</Tab>
      <Tab className="w-[152px] pl-[11px]">Customers</Tab>
      <Tab className="w-[284px] pl-[11px] tracking-[0.200px]">Top Starting Locations</Tab>
      <Tab className="w-[270px] pl-[11px]">Top Ending Locations</Tab>
      <Tab className="w-[244px] pl-[11px]">Gender Breakdown</Tab>
      <Tab className="w-[278px] pl-[11px] tracking-[0px]">Average Trip Duration.</Tab>
      <Tab className="w-[174px] pl-[11px]">Bike Repairs.</Tab>
      <Tab className="w-[198px] bg-[#f8f8f8] pl-[11px] font-bold tracking-[-0.25px]">Bike Utilization</Tab>
      <Tab className="w-[220px] pl-[16px]">
        <svg className="mr-[10px] h-[22px] w-[22px]" viewBox="0 0 22 22" fill="none" stroke="#666" strokeWidth="2"><path d="M1 1h20v20H1zM1 11h20M11 1v20" /></svg>
        NYC Citi Bike.
      </Tab>
      <Tab className="w-[147px] pl-[16px] tracking-[0.500px]">
        <svg className="mr-[9px] h-[24px] w-[23px]" viewBox="0 0 23 24" fill="none" stroke="#666" strokeWidth="2"><path d="M11.500 5 1 1v18l10.500 4L22 19V1zV23" /></svg>
        Story 1
      </Tab>
      <Tab className="w-[63px] pl-[18px]">
        <svg className="h-[30px] w-[30px]" viewBox="0 0 30 30" fill="none" stroke="#666" strokeWidth="2"><path d="M22 14V2H1v21h14M6.500 18v-4M11.500 18V8M16.500 18v-7" /><path d="M15 22.500h14M22 15.500v14" strokeWidth="4" /></svg>
      </Tab>
      <Tab className="w-[64px] pl-[19px]">
        <svg className="h-[30px] w-[30px]" viewBox="0 0 30 30" fill="none" stroke="#666" strokeWidth="2"><path d="M22 14V2H1v21h14M1 12.500h21M11.500 2v21" /><path d="M15 22.500h14M22 15.500v14" strokeWidth="4" /></svg>
      </Tab>
      <Tab className="w-[64px] pl-[19px]">
        <svg className="h-[30px] w-[30px]" viewBox="0 0 30 30" fill="none" stroke="#666" strokeWidth="2"><path d="M22 14V1L11.500 5 1 1v18l10.500 4V5" /><path d="M15 22.500h14M22 15.500v14" strokeWidth="4" /></svg>
      </Tab>
    </div>
  );
}

function StatusBar() {
  return (
    <div className="flex h-[40px] shrink-0 items-center bg-gradient-to-b from-[#e0e0e0] to-[#cdcdcd] text-[20px] tracking-[0px] whitespace-nowrap text-black">
      <div className="w-[159px] shrink-0 pl-[25px] tracking-[0.350px]">13983 marks</div>
      <div className="ml-[23px] w-[198px] shrink-0 tracking-[-0.100px]">1 row by 1 column</div>
      <div className="w-[1747px] shrink-0 pl-px tracking-[0.420px]">SUM(Tripduration): 2,461,840,527</div>
      <div className="flex h-full w-[258px] shrink-0 items-center border-x-2 border-[#c0c0c0]">
        <svg className="ml-[12px] h-[27px] w-[22px]" viewBox="0 0 22 27" fill="none" stroke="#666" strokeWidth="2">
          <circle cx="11" cy="6.500" r="5.200" />
          <path d="M1.500 26v-5q0-5.500 6-5.500h7q6 0 6 5.500v5z" />
        </svg>
        <div className="ml-[20px] w-[170px]">Shah Khan</div>
        <svg className="h-[7px] w-[14px]" viewBox="0 0 14 7"><path d="M0 0h14L7 7z" /></svg>
      </div>
      <div className="h-full w-[54px] shrink-0 border-r-2 border-[#c0c0c0]" />
      <div className="h-full w-[54px] shrink-0 border-r-2 border-[#c0c0c0]" />
      <div className="h-full w-[94px] shrink-0 border-r-2 border-[#c0c0c0]" />
      <svg className="ml-[16px] h-[14px] w-[110px] shrink-0" viewBox="0 0 110 14" fill="#a3a3a3">
        <path d="M0 0h2v14H0zM12 0v14L4 7zM42 0v14L34 7zM66 0v14l8-7zM96 0v14l8-7zM106 0h2v14h-2z" />
      </svg>
      <div className="ml-[14px] h-full w-[2px] shrink-0 bg-[#c0c0c0]" />
      <svg className="ml-[16px] h-[23px] w-[108px] shrink-0" viewBox="0 0 108 23" fill="#a9a9a9">
        <path d="M0 0h6v6H0zM8 0h6v6H8zM16 0h6v6h-6zM0 8.500h6v6H0zM8 8.500h6v6H8zM16 8.500h6v6h-6zM0 17h6v6H0zM8 17h6v6H8zM16 17h6v6h-6zM42 0h22v14.500H42zM42 17h6v6h-6zM50 17h6v6h-6zM58 17h6v6h-6z" />
        <path d="M84 0h22v23H84z" fill="#5e5e5e" />
      </svg>
    </div>
  );
}

/* ---------- dock ---------- */

function App58({ className = "", dot, children }: { className?: string; dot?: boolean; children?: React.ReactNode }) {
  return (
    <div className="relative flex h-[94px] w-[75.530px] shrink-0 flex-col items-center pt-[15px]">
      <div className={`relative h-[58px] w-[58px] rounded-[13px] shadow-[0_1px_3px_rgba(0,0,0,0.35)] ${className}`}>{children}</div>
      {dot && <div className="mt-[9px] h-[8px] w-[8px] rounded-full bg-black" />}
    </div>
  );
}

function Svg({ children, o }: { children: React.ReactNode; o?: boolean }) {
  return (
    <svg className={`h-[58px] w-[58px] rounded-[13px] ${o ? "overflow-visible" : ""}`} viewBox="0 0 58 58" fill="none">
      {children}
    </svg>
  );
}

function Elephant() {
  return (
    <div className="grid h-[43px] w-[43px] *:[grid-area:1/1]">
      <svg className="h-[43px] w-[43px]" viewBox="0 0 24 24" fill="#3a678f">
        <path d="M4.200 1.500Q8 .6 10.500 1.800 13 .3 16 1 20 .3 22 3.200 23.600 6 20.200 13.500l2.600.8q.6 1.600-3.400 2.500-1.500.2-2.900-.2l-.5 4.900q-.6 2.200-3 2.100-2.400 0-2.500-2.600l-.3-4.600q-2 .8-3.300-.2Q6 18.200 4.600 16.800 2.500 13.500 1.200 7q-.4-4.200 3-5.500z" />
      </svg>
      <SiPostgresql className="h-[43px] w-[43px] text-[#eef3f7]" />
    </div>
  );
}

const PAD = ["#8fe35a", "#f4b93c", "#ee8a35", "#c93434", "#a2a5a8", "#ea4864", "#9446d8", "#3e8cf2", "#54c6a6"];
const PETALS = ["#f29a38", "#f0d13a", "#a9cc3c", "#63b56f", "#5aa5d8", "#7d82cf", "#b271b9", "#ea5b50"];

function Dock() {
  return (
    <div className="mt-[2px] ml-[59px] flex h-[94px] w-[2762px] items-start rounded-[28px] bg-[linear-gradient(90deg,#5a5f6a_0%,#5c5d69_18%,#8a5a70_30%,#9c5b5e_40%,#80596a_54%,#80596a_58%,#925a7a_67%,#8b5a70_74%,#9c5c68_82%,#b26052_92%,#b86152_100%)] pl-[5px] shadow-[inset_0_0_0_2px_rgba(255,255,255,0.18)]">
      <App58 dot>
        <Svg>
          <rect width="58" height="58" fill="#e3e8f2" />
          <path d="M0 0h33C26 16 25 26 25 34h9q-1 12 2 24H0z" fill="#3c8cf0" />
          <path d="M0 0h33q-5 12-7 25H0z" fill="#55b9f5" fillOpacity=".6" />
          <path d="M33 0C26 16 25 26 25 34h9M12 39q17 15 34 0M15 17v6M43 17v6" stroke="#17273f" strokeWidth="2" strokeLinecap="round" />
        </Svg>
      </App58>
      <App58 className="bg-[#c3c4c9]">
        <Svg>{PAD.map((c, i) => <rect key={i} x={9 + (i % 3) * 14} y={9 + Math.floor(i / 3) * 14} width="11.500" height="11.500" rx="3" fill={c} />)}</Svg>
      </App58>
      <App58 dot className="bg-[#ececec]">
        <Svg>
          <circle cx="29" cy="29" r="25" fill="#3b8fe4" />
          <circle cx="29" cy="29" r="22" stroke="#cfe5fa" strokeWidth="3" strokeDasharray=".8 2" />
          <path d="M47 14 33 33 25 25z" fill="#e8493c" />
          <path d="M11 45 25 25l8 8z" fill="#f5f5f5" />
        </Svg>
      </App58>
      <App58 dot className="bg-[#f7f7f7]">
        <Svg>
          <circle cx="29" cy="29" r="25" fill="#f3be42" />
          <path d="M29 29 7.400 16.500A25 25 0 0 0 29 54l10-19z" fill="#56a554" />
          <path d="M29 4A25 25 0 0 1 50.600 16.500H29L18 35 7.400 16.500A25 25 0 0 1 29 4z" fill="#d94f3d" />
          <circle cx="29" cy="29" r="12.500" fill="#fff" />
          <circle cx="29" cy="29" r="10" fill="#4883ef" />
        </Svg>
      </App58>
      <App58 dot className="rounded-none bg-transparent">
        <div className="-m-[2px] flex h-[62px] w-[62px] items-center justify-center bg-[#f4f4f4]"><TableauMark mono="#4c7fae" className="h-[58px] w-[58px]" /></div>
      </App58>
      <App58 dot className="bg-white">
        <Svg>
          <path d="M39 9l10 4v32l-10 4z" fill="#3ea0ee" />
          <path d="M39 9 9 35l4 4 4 0 22-17z" fill="#2f7fc6" />
          <path d="M39 49 9 23l4-4h4l22 17z" fill="#2569a9" />
        </Svg>
      </App58>
      <App58 className="bg-white">
        <Svg>
          <rect x="15" y="10" width="33" height="38" rx="2" fill="#2e8f5a" />
          <path d="M31 10h17v10H31z" fill="#5dc08d" /><path d="M15 10h16v10H15z" fill="#3a9f6c" /><path d="M31 29h17v10H31z" fill="#256c43" /><path d="M15 39h33v9H15z" fill="#275c3b" />
          <rect x="5" y="18" width="22" height="22" rx="2" fill="#1b6d3f" />
          <path d="M12 23.500 20 34.500M20 23.500 12 34.500" stroke="#fff" strokeWidth="2.600" />
        </Svg>
      </App58>
      <App58 className="bg-gradient-to-b from-[#8be986] to-[#5ac24a]">
        <Svg><path d="M29 11c12 0 21 7 21 17S41 45 29 45q-4 0-7-1-3 4-7 4 3-3 2-7-9-5-9-13c0-10 9-17 21-17z" fill="#f2f9f0" /></Svg>
      </App58>
      <App58 className="bg-gradient-to-b from-[#3f74e8] to-[#63c3f6]">
        <Svg>
          <rect x="9" y="16" width="40" height="26" rx="2.500" fill="#f1f1f1" />
          <path d="M10 17l16 14q3 2 6 0l16-14M10 41l14-13M48 41 34 28" stroke="#aaa" strokeWidth="1.400" />
        </Svg>
      </App58>
      <App58 className="bg-[#f1f1ef]">
        <Svg>
          <path d="M30 0h28v58z" fill="#7ccf68" />
          <path d="M0 22v36h14z" fill="#d68fc4" /><path d="M0 8 58 58H38L0 22z" fill="#fff" /><path d="M34 58l6-14 18 14z" fill="#f2cb45" />
          <path d="M15 0h14v38H15z" fill="#3f7ff0" />
          <path d="M38 0q2 20 20 22" stroke="#dadde0" strokeWidth="7" />
          <circle cx="22" cy="37" r="14" fill="#fff" /><circle cx="22" cy="37" r="12" fill="#3478f0" />
          <path d="M22 28l7 16-7-4-7 4z" fill="#fff" />
        </Svg>
      </App58>
      <App58 className="bg-[#f8f8f8]">
        <Svg>
          {PETALS.map((c, i) => (
            <rect key={i} x="22.500" y="4" width="13" height="23" rx="6.500" fill={c} fillOpacity=".88" transform={`rotate(${i * 45} 29 29)`} />
          ))}
        </Svg>
      </App58>
      <App58 className="bg-gradient-to-b from-[#84e377] to-[#5bc04a]">
        <Svg><rect x="9" y="17" width="27" height="25" rx="6" fill="#eef6ec" /><path d="M38 26l10-8v22l-10-8z" fill="#dff0dc" /></Svg>
        <div className="absolute -top-[8px] -right-[8px] flex h-[27px] w-[27px] items-center justify-center rounded-full bg-[#e5503f] font-['Inter',sans-serif] text-[17px] text-white">1</div>
      </App58>
      <App58 className="overflow-hidden bg-[#faf9f8] font-['Inter',sans-serif]">
        <div className="flex h-[18px] items-center justify-center bg-[#e2614f] text-[12px] font-semibold text-white">JAN</div>
        <div className="text-center text-[35px] leading-[38px] font-light tracking-[-1px] text-[#222]">30</div>
      </App58>
      <App58 className="bg-[#a58149]">
        <Svg o>
          <path d="M58 10h2.500v9H58zM58 20h2.500v9H58z" fill="#66a9d0" /><path d="M58 31h2.500v9H58z" fill="#e79b43" /><path d="M58 42h2.500v8H58z" fill="#6fb560" />
          <circle cx="30" cy="29" r="18" stroke="#7d6236" strokeWidth="2" fill="#98763f" />
          <circle cx="30" cy="25" r="7" fill="#7d6236" /><path d="M17 41q4-7 13-7t13 7q-5 6-13 6t-13-6z" fill="#7d6236" />
        </Svg>
      </App58>
      <App58 className="bg-white">
        <Svg>
          {["#3d7ff0", "#e8503f", "#ee9a3a"].map((c, i) => (
            <g key={c}><circle cx="11.500" cy={14.500 + i * 14.500} r="3.500" fill={c} /><circle cx="11.500" cy={14.500 + i * 14.500} r="5" stroke={c} /><path d={`M21 ${14.500 + i * 14.500}h31`} stroke="#b8b8b8" strokeWidth="1.500" /></g>
          ))}
        </Svg>
      </App58>
      <App58 className="overflow-hidden bg-[#f1f0ec]">
        <Svg><path d="M0 0h58v14H0z" fill="#f7cf4a" /><path d="M0 15h58" stroke="#bdb9ae" strokeWidth="2" /><path d="M1 18h56" stroke="#c9c6be" strokeDasharray="1 2" /><path d="M0 29h58M0 43h58" stroke="#dddbd6" /></Svg>
      </App58>
      <App58 className="flex items-center justify-center bg-gradient-to-b from-[#2b3733] to-[#0e1213] font-['Inter',sans-serif] text-[25px] font-medium tracking-[-1px] text-white">
        <FaApple className="h-[21px] w-[19px]" />tv
      </App58>
      <App58 className="flex items-center justify-center bg-gradient-to-b from-[#ec6377] to-[#e8414a]">
        <FaMusic className="h-[35px] w-[35px] text-white" />
      </App58>
      <App58 className="flex items-center justify-center bg-gradient-to-b from-[#b664e8] to-[#6f2aaf]">
        <FaPodcast className="h-[45px] w-[45px] text-white" />
      </App58>
      <App58 className="bg-white">
        <Svg>
          <path d="M12 16q0-4 4-4h30v34H16q-4 0-4-4z" fill="#e8475a" />
          <path d="M12 12h14l20 34H32z" fill="#fff" />
          <path d="M12 18l16 28H12zM46 40 30 12h16z" fill="#e8475a" />
        </Svg>
      </App58>
      <App58 className="bg-gradient-to-b from-[#5fc3f8] to-[#3068e8]">
        <Svg>
          <path d="M14 8h30l2 16H12z" fill="#f3f5f8" /><circle cx="29" cy="15" r="5.500" fill="#6fb64f" /><path d="M29 15V9.500a5.500 5.500 0 0 1 5 7.500z" fill="#f0a63d" /><path d="M29 15l-5 2.500a5.500 5.500 0 0 1 5-8z" fill="#4c8ee8" />
          <path d="M29 26v21" stroke="#dfe6f2" strokeWidth="2.500" /><path d="M20 49h18" stroke="#f3f5f8" strokeWidth="3.500" /><path d="M13 24.500h32" stroke="#c5ccd8" strokeWidth="2" />
        </Svg>
      </App58>
      <App58 className="bg-gradient-to-b from-[#97ec72] to-[#5fcf46]">
        <Svg><g fill="#f6fbf4"><rect x="10" y="38" width="7" height="11" rx="1.500" /><rect x="20" y="27" width="7" height="22" rx="1.500" /><rect x="30" y="8" width="7" height="41" rx="1.500" /><rect x="40" y="19" width="7" height="30" rx="1.500" /></g></Svg>
      </App58>
      <App58 className="bg-gradient-to-b from-[#f4b146] to-[#f08b39]">
        <Svg><path d="M47 11 17 42l-7 7 4-10L43 10z" fill="#fff" /><path d="M10 49l4-9 3 3z" fill="#555" /><path d="M20 49h29" stroke="#fbd3a8" strokeWidth="2" /></Svg>
      </App58>
      <App58 className="bg-gradient-to-b from-[#418df8] to-[#2f77f2]">
        <Svg><rect x="9" y="18" width="28" height="22" rx="5" fill="#fff" /><path d="M39 26l10-8v22l-10-8z" fill="#fff" /></Svg>
      </App58>
      <App58 dot className="bg-white">
        <Svg>
          <g strokeWidth="8" strokeLinecap="round">
            <path d="M23 13h.01M12 23h11" stroke="#5dc1ee" /><path d="M34 13v10M45 23h.01" stroke="#52b183" />
            <path d="M45 34H34M34 45h.01" stroke="#e5b33c" /><path d="M23 45V34M12 34h.01" stroke="#cf2752" />
          </g>
        </Svg>
      </App58>
      <App58 dot className="border-[2px] border-[#b9c4cb] bg-black">
        <Svg><rect x="4" y="4" width="46" height="46" rx="6" fill="#232323" /><path d="M8 8l5 5-5 4M17 19h8" stroke="#fff" strokeWidth="2" /></Svg>
      </App58>
      <App58 className="bg-gradient-to-b from-[#4bb0f2] to-[#2b5fe0]">
        <Svg><path d="M31 12 15 45M27 12l16 33M9 37h26M41 37h8" stroke="#fff" strokeWidth="4.500" strokeLinecap="round" /></Svg>
      </App58>
      <App58 className="bg-gradient-to-b from-[#4bb0f2] to-[#2456cc]">
        <Svg o>
          <rect x="4" y="4" width="50" height="50" rx="10" stroke="#86c1f7" /><circle cx="29" cy="29" r="21" stroke="#79b6f4" />
          <path d="M31 12 15 45M27 12l16 33M9 37h40" stroke="#8cc4fa" strokeWidth="3" />
          <path d="M40 1 22 59" stroke="#2c3038" strokeWidth="6" strokeLinecap="round" /><path d="M31-2q12-3 20 4l10 6-3 5-8-3-6-3-10-4z" fill="#4e545c" />
        </Svg>
      </App58>
      <App58 className="bg-gradient-to-b from-[#cfdae0] to-[#8c8b88]">
        <Svg>
          <circle cx="29" cy="29" r="24" fill="#3d3f41" /><circle cx="29" cy="29" r="21" stroke="#b4b4b4" strokeWidth="3" strokeDasharray="2 1.500" />
          <circle cx="29" cy="29" r="16.500" stroke="#9fa1a1" strokeWidth="3" /><path d="M29 29V13M29 29 15 37M29 29l14 8" stroke="#a5a7a7" strokeWidth="4" /><circle cx="29" cy="29" r="5" fill="#6b6d6d" />
        </Svg>
      </App58>
      <App58 className="rounded-full shadow-none">
        <Svg o>
          <circle cx="29" cy="29" r="30.500" stroke="#63b043" strokeWidth="11" />
          <path d="M26-8Q8 4 2 22M14-6Q0 14 4 50M-8 14l18 8M-8 28l14-6M-7 40l14-12M-2 50l8-14M8 4l18 2" stroke="#a45d66" strokeWidth="1.800" />
        </Svg>
      </App58>
      <App58 className="flex items-center justify-center bg-gradient-to-b from-[#dfe6ee] to-[#c2d0de]">
        <Elephant />
      </App58>
      <App58 className="border-[2px] border-[#9aa2a4] bg-black">
        <Svg><rect x="3" y="3" width="48" height="48" rx="7" fill="#1f3330" /><path d="M3 15h48M3 27h48M3 39h48M15 3v48M27 3v48M39 3v48" stroke="#36564f" /><path d="M4 32h9l2-24 3 36 3-12h6l3-6 3 6 4-3 4 3h9" stroke="#7fd3bd" strokeWidth="1.500" /></Svg>
      </App58>
      <App58 className="flex items-center justify-center bg-gradient-to-b from-[#dfe6ee] to-[#c2d0de]">
        <Elephant />
      </App58>
      <App58 className="flex items-center justify-center bg-gradient-to-b from-[#a94644] to-[#8c3a3a] font-['Liberation_Serif',serif] text-[31px] text-[#f5ecea]">
        Aa
      </App58>
      <App58 className="rounded-none bg-transparent">
        <div className="-m-[2px] flex h-[62px] w-[62px] items-center justify-center bg-[#f4f4f4]"><TableauMark mono="#4c7fae" className="h-[58px] w-[58px]" /></div>
      </App58>
      <div className="mt-[12px] ml-[16px] h-[70px] w-[2px] shrink-0 bg-[#7f2f26]" />
      <svg className="mt-[7px] ml-[25px] h-[72px] w-[56px] shrink-0" viewBox="0 0 56 72">
        <path d="M4 10 14 3l8 4 8-6 8 6 8-3 6 8-4 8H8z" fill="#e2ddd9" />
        <path d="M12 10l6-5 4 8zM28 4l6 8-8 2zM40 7l6 8h-9z" fill="#47505c" /><path d="M20 8l5 2-3 6z" fill="#63a56c" />
        <path d="M3 13q25 8 50 0l-6 50q-1 6-8 6.500-11 1.500-22 0-7-.5-8-6.500z" fill="#d5cdca" fillOpacity=".92" />
        <path d="M3 13q25 8 50 0" stroke="#f7f5f4" strokeWidth="2" fill="none" />
        <path d="M14 24l3 40M28 24v42M42 24l-3 40" stroke="#ebe7e5" strokeWidth="3" strokeOpacity=".6" />
      </svg>
    </div>
  );
}

/* ---------- page ---------- */

export default function App() {
  return (
    <div className="relative flex h-[1800px] w-[2880px] flex-col overflow-hidden bg-[linear-gradient(90deg,#04121f_0%,#04121f_19%,#2b051c_21%,#33061c_34%,#4a1a16_36%,#2b0618_39%,#230418_52%,#350c2c_66%,#3c0d28_76%,#571622_84%,#7a2413_96%,#82280f_100%)] font-['Noto_Sans','Open_Sans',sans-serif]">
      <MenuBar />
      <div className="h-[2px] shrink-0 bg-[linear-gradient(90deg,#04142a_0%,#04142a_22%,#b5681d_22.100%,#a8571a_38%,#6b1a10_48%,#3c0d0c_72%,#0a1020_88%)]" />
      <div className="flex h-[1644px] shrink-0 flex-col overflow-hidden rounded-[22px] bg-[#f5f5f5]">
        <div className="flex h-[57px] shrink-0 items-center border-b-2 border-[#d0cccb] bg-[#f6f1ee]">
          <div className="ml-[16px] h-[24px] w-[24px] rounded-full border border-[#d9574a] bg-[#ed6a5e]" />
          <div className="ml-[16px] h-[24px] w-[24px] rounded-full border border-[#dba43c] bg-[#f5bf4f]" />
          <div className="ml-[16px] h-[24px] w-[24px] rounded-full border border-[#54ab41] bg-[#61c554]" />
          <div className="flex-1 pr-[125px] pb-px text-center font-['Inter',sans-serif] text-[26px] font-bold tracking-[0.170px] text-[#454344]">Tableau Public - project 1</div>
        </div>
        <Toolbar />
        <div className="flex h-[1404px] shrink-0">
          <DataPane />
          <Cards />
          <View />
        </div>
        <SheetTabs />
        <StatusBar />
      </div>
      <Dock />
      <ShowMe />
    </div>
  );
}
